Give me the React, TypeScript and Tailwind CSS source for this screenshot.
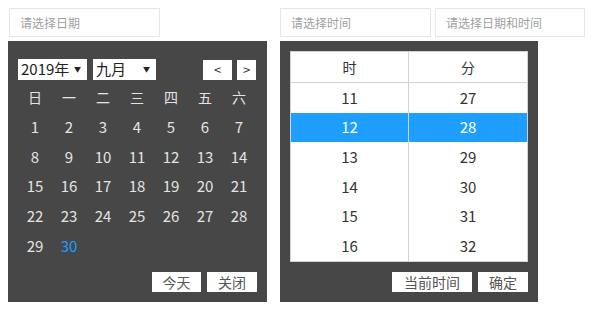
const font = { fontFamily: '"Noto Sans CJK SC", "Noto Sans", sans-serif' };

const weekDays = ['日', '一', '二', '三', '四', '五', '六'];
const days: (number | null)[] = [...Array(30)].map((_, i) => i + 1);
const hours = [11, 12, 13, 14, 15, 16];
const minutes = [27, 28, 29, 30, 31, 32];

function TextInput({ placeholder, className }: { placeholder: string; className: string }) {
  return (
    <div
      className={`h-[29px] border border-[#e6e6e6] bg-white pl-[10px] flex items-center text-[12px] text-[#a0a0a0] ${className}`}
    >
      {placeholder}
    </div>
  );
}

function Calendar() {
  return (
    <div className="w-[259px] h-[261px] bg-[#474747] px-[10px] pt-[18px] flex flex-col">
      <div className="flex items-center h-[21px]">
        <div className="w-[69px] h-[21px] bg-white flex items-center justify-between pl-[3px] pr-[6px] text-[15px] text-[#222]">
          <span>2019年</span>
          <span className="text-[7px]">▼</span>
        </div>
        <div className="ml-[6px] w-[63px] h-[21px] bg-white flex items-center justify-between pl-[3px] pr-[6px] text-[15px] text-[#222]">
          <span>九月</span>
          <span className="text-[7px]">▼</span>
        </div>
        <div className="ml-auto w-[29px] h-[20px] bg-white flex items-center justify-center text-[13px] text-[#333]">
          &lt;
        </div>
        <div className="ml-[5px] mr-[1px] w-[19px] h-[20px] bg-white flex items-center justify-center text-[13px] text-[#333]">
          &gt;
        </div>
      </div>
      <div className="mt-[3px] grid grid-cols-7 w-[238px]">
        {weekDays.map((d) => (
          <div key={d} className="h-[29.6px] flex items-center justify-center text-[14px] text-[#e4e4e4]">
            {d}
          </div>
        ))}
        {days.map((d) => (
          <div
            key={d}
            className={`h-[29.6px] flex items-center justify-center text-[15px] ${
              d === 30 ? 'text-[#1e9fff]' : 'text-[#e4e4e4]'
            }`}
          >
            {d}
          </div>
        ))}
      </div>
      <div className="mt-auto mb-[10px] flex justify-end gap-[6px]">
        <div className="w-[49px] h-[20px] bg-white flex items-center justify-center text-[14px] text-[#555]">今天</div>
        <div className="w-[50px] h-[20px] bg-white flex items-center justify-center text-[14px] text-[#555]">关闭</div>
      </div>
    </div>
  );
}

function TimePicker() {
  return (
    <div className="w-[258px] h-[261px] bg-[#474747] p-[10px] flex flex-col">
      <div className="border border-[#d2d2d2] bg-white">
        <div className="grid grid-cols-2 border-b border-[#d2d2d2]">
          <div className="h-[30px] flex items-center justify-center text-[14px] text-[#333] border-r border-[#d2d2d2]">时</div>
          <div className="h-[30px] flex items-center justify-center text-[14px] text-[#333]">分</div>
        </div>
        {hours.map((h, i) => {
          const active = h === 12;
          return (
            <div key={h} className={`grid grid-cols-2 ${active ? 'bg-[#1e9fff] text-white' : 'text-[#333]'}`}>
              <div className="h-[29.7px] flex items-center justify-center text-[15px] border-r border-[#d2d2d2]">{h}</div>
              <div className="h-[29.7px] flex items-center justify-center text-[15px]">{minutes[i]}</div>
            </div>
          );
        })}
      </div>
      <div className="mt-auto flex justify-end gap-[6px]">
        <div className="w-[80px] h-[20px] bg-white flex items-center justify-center text-[14px] text-[#555]">当前时间</div>
        <div className="w-[50px] h-[20px] bg-white flex items-center justify-center text-[14px] text-[#555]">确定</div>
      </div>
    </div>
  );
}

export default function App() {
  return (
    <div className="w-[596px] h-[310px] bg-white flex pt-[8px] pl-[8px]" style={font}>
      <div className="flex flex-col">
        <TextInput placeholder="请选择日期" className="w-[151px] ml-px" />
        <div className="mt-[4px]">
          <Calendar />
        </div>
      </div>
      <div className="ml-[13px] flex flex-col">
        <div className="flex gap-[4px]">
          <TextInput placeholder="请选择时间" className="w-[151px]" />
          <TextInput placeholder="请选择日期和时间" className="w-[150px]" />
        </div>
        <div className="mt-[4px]">
          <TimePicker />
        </div>
      </div>
    </div>
  );
}
